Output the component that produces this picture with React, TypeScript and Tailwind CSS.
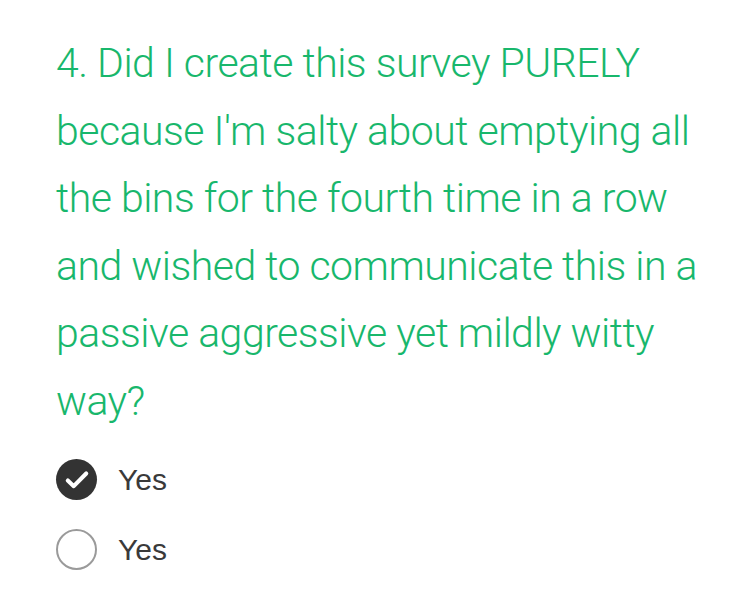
import React from 'react';

const lines = [
  '4. Did I create this survey PURELY',
  "because I'm salty about emptying all",
  'the bins for the fourth time in a row',
  'and wished to communicate this in a',
  'passive aggressive yet mildly witty',
  'way?',
];

const CheckedCircle: React.FC = () => (
  <div className="w-[41px] h-[41px] rounded-full bg-[#333333] flex items-center justify-center">
    <svg width="26" height="26" viewBox="0 0 24 24" fill="none">
      <path
        d="M3.5 12.5l5.5 5.2L20.5 6"
        stroke="#ffffff"
        strokeWidth="3.8"
        strokeLinecap="round"
        strokeLinejoin="round"
      />
    </svg>
  </div>
);

const EmptyCircle: React.FC = () => (
  <div className="w-[41px] h-[41px] rounded-full border-2 border-[#9a9a9a] bg-white" />
);

const Option: React.FC<{ checked?: boolean; label: string }> = ({ checked, label }) => (
  <div className="flex items-center gap-[21px] h-[70px]">
    {checked ? <CheckedCircle /> : <EmptyCircle />}
    <span className="text-[30px] text-[#3a3a3a] font-['Liberation_Sans',Arial,sans-serif]">
      {label}
    </span>
  </div>
);

const App: React.FC = () => {
  return (
    <div className="w-[750px] h-[611px] bg-white overflow-hidden pl-[56px] pt-[30px]">
      <p className="text-[41px] leading-[67.6px] tracking-[-0.5px] font-light text-[#18b76c] font-['Roboto',sans-serif] whitespace-nowrap">
        {lines.map((line, i) => (
          <span key={i} className="block">
            {line}
          </span>
        ))}
      </p>
      <div className="flex flex-col mt-[9px]">
        <Option checked label="Yes" />
        <Option label="Yes" />
      </div>
    </div>
  );
};

export default App;
